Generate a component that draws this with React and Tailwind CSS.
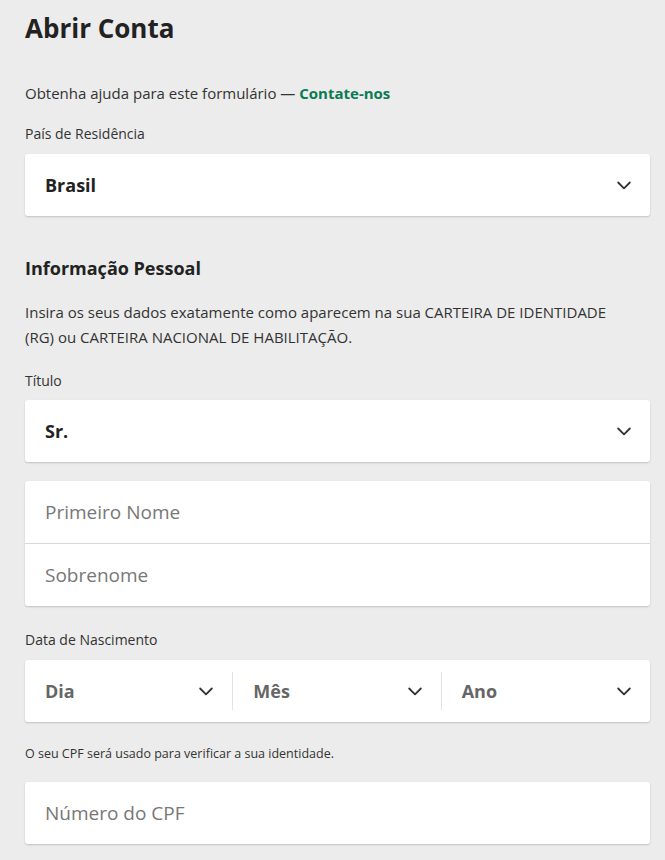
import React from 'react';

function Chevron() {
  return (
    <svg width="20" height="20" viewBox="0 0 24 24" fill="none" stroke="#333" strokeWidth="2.2" strokeLinecap="round" strokeLinejoin="round">
      <path d="M5 9l7 7 7-7" />
    </svg>
  );
}

function SelectBox({ value }) {
  return (
    <div className="flex h-[62px] items-center justify-between rounded-[3px] bg-white pl-5 pr-[16px] shadow-[0_1px_2px_rgba(0,0,0,0.18)]">
      <span className="text-[18px] font-bold text-[#222]">{value}</span>
      <Chevron />
    </div>
  );
}

function DatePart({ value, last }) {
  return (
    <div className="flex flex-1 items-center">
      <div className="flex flex-1 items-center justify-between pl-5 pr-[16px]">
        <span className="text-[18px] font-bold text-[#666]">{value}</span>
        <Chevron />
      </div>
      {!last && <div className="h-[38px] w-px bg-[#e2e2e2]" />}
    </div>
  );
}

export default function App() {
  return (
    <div className="min-h-screen bg-[#ebeceb] pl-[25px] pr-[15px] pt-[10px] font-['Open_Sans',sans-serif] text-[#333]">
      <h1 className="text-[26px] font-bold leading-[36px] text-[#222]">Abrir Conta</h1>

      <p className="mt-[37px] text-[15px] leading-[20px]">
        Obtenha ajuda para este formulário — <a className="font-bold text-[#0b7a55]">Contate-nos</a>
      </p>

      <label className="mt-[21px] block text-[14px] leading-[20px]">País de Residência</label>
      <div className="mt-[10px]">
        <SelectBox value="Brasil" />
      </div>

      <h2 className="mt-[40px] text-[18px] font-bold leading-[24px] text-[#222]">Informação Pessoal</h2>

      <p className="mt-[20px] text-[15px] leading-[25px]">
        Insira os seus dados exatamente como aparecem na sua CARTEIRA DE IDENTIDADE<br />
        (RG) ou CARTEIRA NACIONAL DE HABILITAÇÃO.
      </p>

      <label className="mt-[21px] block text-[14px] leading-[20px]">Título</label>
      <div className="mt-[9px]">
        <SelectBox value="Sr." />
      </div>

      <div className="mt-[19px] rounded-[3px] bg-white shadow-[0_1px_2px_rgba(0,0,0,0.18)]">
        <div className="flex h-[63px] items-center border-b border-[#d8d8d8] px-5 text-[19px] text-[#777]">Primeiro Nome</div>
        <div className="flex h-[62px] items-center px-5 text-[19px] text-[#777]">Sobrenome</div>
      </div>

      <label className="mt-[24px] block text-[14px] leading-[20px]">Data de Nascimento</label>
      <div className="mt-[10px] flex h-[62px] items-center rounded-[3px] bg-white shadow-[0_1px_2px_rgba(0,0,0,0.18)]">
        <DatePart value="Dia" />
        <DatePart value="Mês" />
        <DatePart value="Ano" last />
      </div>

      <p className="mt-[22px] text-[12.5px] leading-[20px]">O seu CPF será usado para verificar a sua identidade.</p>

      <div className="mt-[18px] flex h-[62px] items-center rounded-[3px] bg-white px-5 text-[19px] text-[#777] shadow-[0_1px_2px_rgba(0,0,0,0.18)]">
        Número do CPF
      </div>
    </div>
  );
}
